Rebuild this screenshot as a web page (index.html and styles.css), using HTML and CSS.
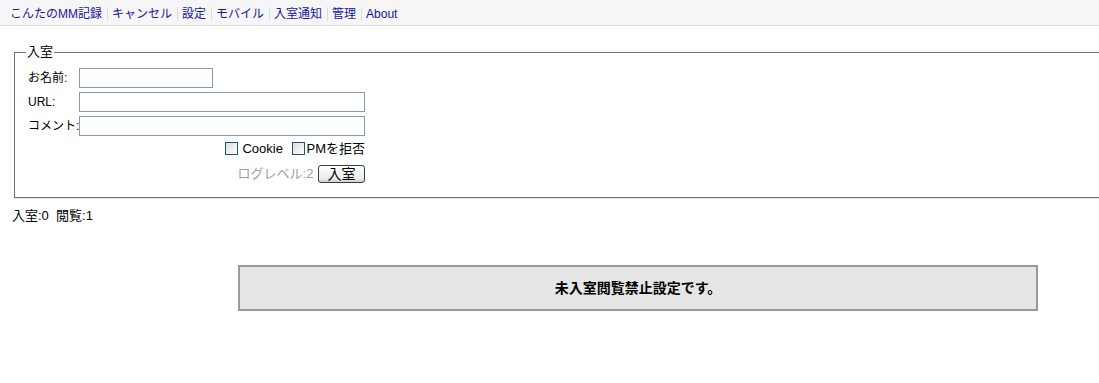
FILE: index.html
```html
<!DOCTYPE html>
<html lang="ja">
<head>
  <meta charset="UTF-8" />
  <title>こんたのMM記録</title>
  <link rel="stylesheet" href="styles.css">
</head>
<body>

<div class="menu">
  <a href="#">こんたのMM記録</a><a href="#">キャンセル</a><a href="#">設定</a><a href="#">モバイル</a><a href="#">入室通知</a><a href="#">管理</a><a href="#">About</a>
</div>

<fieldset class="enter">
  <legend>入室</legend>
  <div class="form">
    <label for="name">お名前:</label>
    <input type="text" id="name" class="short" autofocus />
    <label for="url">URL:</label>
    <input type="text" id="url" />
    <label for="comment">コメント:</label>
    <input type="text" id="comment" />
    <div class="opts">
      <label><input type="checkbox" /> Cookie</label>
      <label><input type="checkbox" />PMを拒否</label>
    </div>
    <div class="submit">
      <span class="loglevel">ログレベル:2</span>
      <button type="button">入室</button>
    </div>
  </div>
</fieldset>

<div class="count">入室:0&nbsp; 閲覧:1</div>

<div class="notice">未入室閲覧禁止設定です。</div>

</body>
</html>
```

FILE: styles.css
```css
body {
  margin: 0;
  font-family: "Liberation Sans", "Noto Sans CJK JP", sans-serif;
  font-size: 13px;
  color: #000;
  background: #fff;
  overflow: hidden;
}
.menu {
  height: 22px;
  padding: 3px 0 0 6px;
  line-height: 22px;
  font-size: 12px;
  background: #f6f6f6;
  border-bottom: 1px solid #dedede;
}
.menu a {
  color: #1515a0;
  text-decoration: none;
  padding: 0 5px 0 4px;
  border-left: 1px solid #dcdcdc;
}
.menu a:first-child {
  border-left: none;
}
.enter {
  margin: 18px -30px 0 14px;
  padding: 0 0 14px 13px;
  border: 1px solid #737373;
  box-shadow: 0 1px 0 #e4e4e4;
}
.enter legend {
  padding: 0 1px;
  margin-left: -2px;
  line-height: 16px;
}
.form {
  width: 337px;
  display: grid;
  grid-template-columns: 51px 286px;
  row-gap: 4px;
  padding-top: 8px;
}
.form > label {
  font-size: 12px;
  line-height: 20px;
  white-space: nowrap;
}
.form input[type=text] {
  box-sizing: border-box;
  height: 20px;
  margin: 0;
  border: 1px solid #7f9db9;
  padding: 1px 3px;
  font: inherit;
}
.form input.short {
  width: 134px;
}
.form input[type=text]:focus {
  outline: none;
}
.opts, .submit {
  grid-column: 1 / 3;
  text-align: right;
  white-space: nowrap;
}
.opts {
  line-height: 18px;
}
.opts label + label {
  margin-left: 6px;
}
.opts input {
  appearance: none;
  width: 13px;
  height: 13px;
  margin: 0 1px 0 0;
  vertical-align: -2px;
  border: 1px solid #1c5180;
  background: linear-gradient(135deg, #dcdcd7, #fff);
}
.submit {
  line-height: 18px;
  margin-top: 3px;
}
.loglevel {
  color: #a0a0a0;
  margin-right: 1px;
}
.submit button {
  width: 47px;
  height: 18px;
  padding: 0;
  vertical-align: top;
  font: inherit;
  font-size: 14px;
  line-height: 14px;
  border: 1px solid #2b3e5a;
  border-radius: 3px;
  background: linear-gradient(#fff, #ecebe6 80%, #d6d0c5);
  color: #000;
}
.count {
  margin: 7px 0 0 12px;
}
.notice {
  box-sizing: border-box;
  width: 800px;
  height: 46px;
  margin: 41px 0 0 238px;
  border: 2px solid #999;
  background: #e6e6e6;
  text-align: center;
  line-height: 42px;
  font-weight: bold;
  font-size: 14px;
}
```
